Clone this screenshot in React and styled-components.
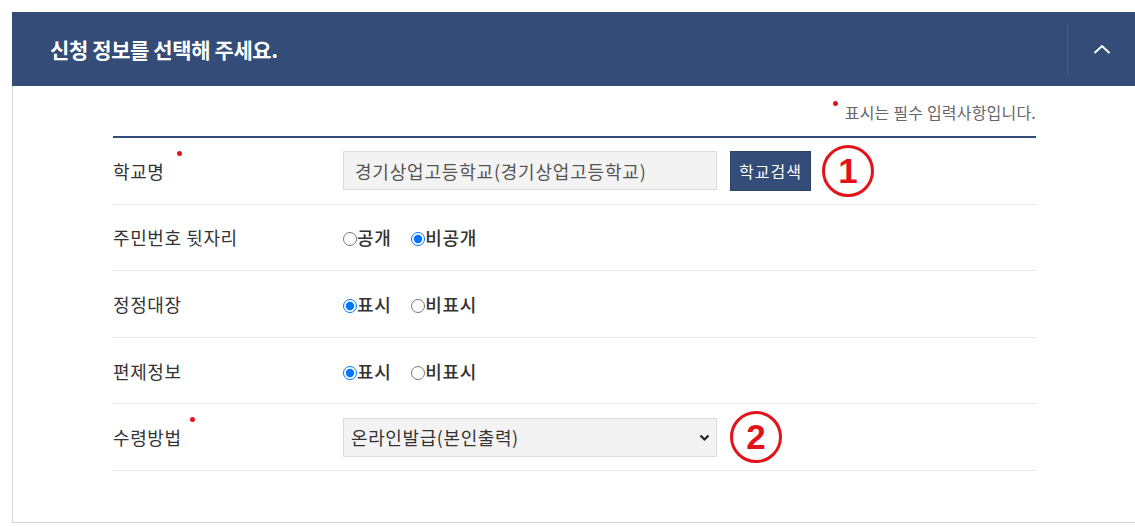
import React from 'react'
import styled, { createGlobalStyle } from 'styled-components'

const GlobalStyle = createGlobalStyle`
  html, body {
    margin: 0;
    padding: 0;
    background: #fff;
    overflow: hidden;
  }
  body {
    font-family: "Noto Sans CJK KR", "Noto Sans", sans-serif;
    color: #333;
  }
`

const Page = styled.div`
  padding: 12px 0 0 12px;
`

const Panel = styled.section`
  width: 1123px;
  border: 1px solid #d4d4d4;
  border-right: none;
  box-sizing: border-box;
`

const Header = styled.header`
  display: flex;
  align-items: center;
  height: 74px;
  margin: -1px 0 0 -1px;
  background: #344c78;
  padding-left: 38px;
`

const Title = styled.h2`
  flex: 1;
  margin: 0;
  font-size: 21px;
  font-weight: 700;
  letter-spacing: -0.4px;
  color: #fff;
`

const ToggleButton = styled.button`
  display: flex;
  align-items: center;
  justify-content: center;
  width: 68px;
  height: 50px;
  padding: 0;
  border: none;
  border-left: 1px solid rgba(255, 255, 255, 0.12);
  background: transparent;
  cursor: pointer;
`

const Body = styled.div`
  padding: 0 99px 51px 100px;
`

const Notice = styled.p`
  display: flex;
  justify-content: flex-end;
  margin: 16px 0 14px;
  line-height: 20px;
  font-size: 16px;
  letter-spacing: 0.2px;
  color: #666;
`

const Dot = styled.span`
  position: relative;
  &::after {
    content: '';
    position: absolute;
    top: ${p => p.$top}px;
    right: ${p => p.$right}px;
    width: 5px;
    height: 5px;
    border-radius: 50%;
    background: #e3131b;
  }
`

const NoticeMark = styled(Dot)`
  width: 12px;
`

const Table = styled.div`
  border-top: 2px solid #344c78;
`

const Row = styled.div`
  display: flex;
  align-items: center;
  height: 66.6px;
  border-bottom: 1px solid #e6e6e6;
  box-sizing: border-box;
`

const Label = styled.div`
  width: 230px;
  font-size: 18px;
  letter-spacing: 0.6px;
  color: #333;
`

const Value = styled.div`
  display: flex;
  align-items: center;
  flex: 1;
`

const TextInput = styled.input`
  width: 374px;
  height: 39px;
  box-sizing: border-box;
  padding: 0 11px;
  border: 1px solid #dcdcdc;
  background: #f3f3f3;
  font-family: inherit;
  font-size: 18px;
  letter-spacing: 0.8px;
  color: #555;
  outline: none;
`

const SearchButton = styled.button`
  height: 40px;
  margin-left: 13px;
  padding: 0 8px;
  border: 1px solid #2c4269;
  background: #344c78;
  font-family: inherit;
  font-size: 16px;
  letter-spacing: 1px;
  color: #fff;
`

const Badge = styled.span`
  display: flex;
  align-items: center;
  justify-content: center;
  width: 52px;
  height: 52px;
  box-sizing: border-box;
  margin-left: ${p => p.$gap}px;
  border: 3.5px solid #e3131b;
  border-radius: 50%;
  font-family: "Liberation Sans", Arial, sans-serif;
  font-size: 35px;
  font-weight: 700;
  color: #e3131b;
`

const RadioGroup = styled.div`
  display: flex;
  align-items: center;
  gap: 20px;
`

const RadioLabel = styled.label`
  display: flex;
  align-items: center;
  font-size: 18px;
  font-weight: 500;
  letter-spacing: 0.6px;
  color: #333;
`

const Radio = styled.input`
  width: 14px;
  height: 14px;
  margin: 4px 0 0 0;
`

const SelectWrap = styled.div`
  position: relative;
  width: 374px;
  height: 39px;
`

const Select = styled.select`
  width: 100%;
  height: 100%;
  padding: 0 30px 0 7px;
  appearance: none;
  border: 1px solid #dcdcdc;
  border-radius: 0;
  background: #f3f3f3;
  font-family: inherit;
  font-size: 18px;
  letter-spacing: 0.6px;
  color: #333;
  outline: none;
`

const Caret = styled.svg`
  position: absolute;
  right: 7px;
  top: 16px;
  pointer-events: none;
`

const RadioSet = ({ name, options, checked }) => (
  <RadioGroup>
    {options.map(o => (
      <RadioLabel key={o}>
        <Radio type="radio" name={name} defaultChecked={o === checked} />
        {o}
      </RadioLabel>
    ))}
  </RadioGroup>
)

const App = () => (
  <>
    <GlobalStyle />
    <Page>
      <Panel>
        <Header>
          <Title>신청 정보를 선택해 주세요.</Title>
          <ToggleButton aria-label="접기">
            <svg width="18" height="10" viewBox="0 0 18 10">
              <path d="M1.5 9 L9 2 L16.5 9" fill="none" stroke="#fff" strokeWidth="2" />
            </svg>
          </ToggleButton>
        </Header>
        <Body>
          <Notice>
            <NoticeMark $top={-1} $right={7} />
            표시는 필수 입력사항입니다.
          </Notice>
          <Table>
            <Row>
              <Label>
                <Dot $top={-7} $right={-18}>학교명</Dot>
              </Label>
              <Value>
                <TextInput readOnly value="경기상업고등학교(경기상업고등학교)" />
                <SearchButton>학교검색</SearchButton>
                <Badge $gap={11}>1</Badge>
              </Value>
            </Row>
            <Row>
              <Label>주민번호 뒷자리</Label>
              <Value>
                <RadioSet name="jumin" options={['공개', '비공개']} checked="비공개" />
              </Value>
            </Row>
            <Row>
              <Label>정정대장</Label>
              <Value>
                <RadioSet name="jeong" options={['표시', '비표시']} checked="표시" />
              </Value>
            </Row>
            <Row>
              <Label>편제정보</Label>
              <Value>
                <RadioSet name="pyeon" options={['표시', '비표시']} checked="표시" />
              </Value>
            </Row>
            <Row>
              <Label>
                <Dot $top={-7} $right={-13}>수령방법</Dot>
              </Label>
              <Value>
                <SelectWrap>
                  <Select defaultValue="online">
                    <option value="online">온라인발급(본인출력)</option>
                  </Select>
                  <Caret width="11" height="8" viewBox="0 0 11 8">
                    <path d="M1.5 1.5 L5.5 5.5 L9.5 1.5" fill="none" stroke="#222" strokeWidth="2.2" />
                  </Caret>
                </SelectWrap>
                <Badge $gap={13}>2</Badge>
              </Value>
            </Row>
          </Table>
        </Body>
      </Panel>
    </Page>
  </>
)

export default App
